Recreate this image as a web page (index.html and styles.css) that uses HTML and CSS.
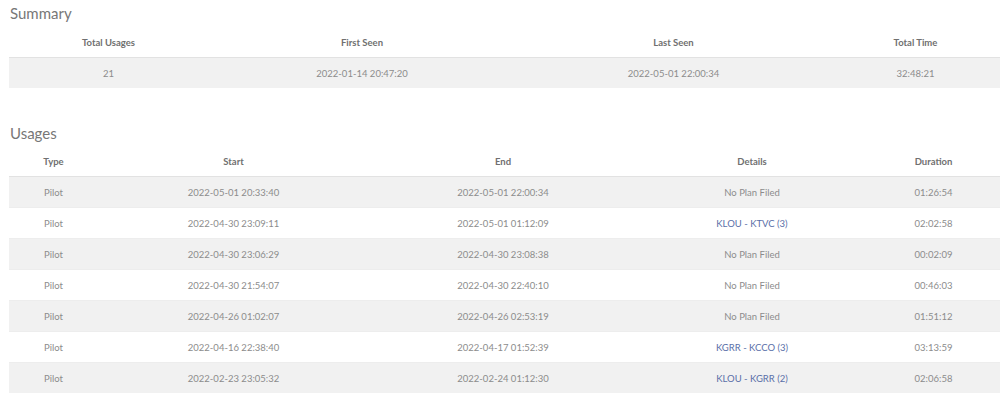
FILE: index.html
```html
<!DOCTYPE html>
<html>
<head>
<meta charset="utf-8">
<link rel="stylesheet" href="styles.css">
</head>
<body>
<div class="page">
  <section class="block summary">
    <h2 class="title">Summary</h2>
    <table class="grid">
      <colgroup>
        <col class="s1"><col class="s2"><col class="s3"><col class="s4">
      </colgroup>
      <thead>
        <tr><th>Total Usages</th><th>First Seen</th><th>Last Seen</th><th>Total Time</th></tr>
      </thead>
      <tbody>
        <tr><td>21</td><td>2022-01-14 20:47:20</td><td>2022-05-01 22:00:34</td><td>32:48:21</td></tr>
      </tbody>
    </table>
  </section>

  <section class="block usages">
    <h2 class="title">Usages</h2>
    <table class="grid">
      <colgroup>
        <col class="u1"><col class="u2"><col class="u3"><col class="u4"><col class="u5">
      </colgroup>
      <thead>
        <tr><th>Type</th><th>Start</th><th>End</th><th>Details</th><th>Duration</th></tr>
      </thead>
      <tbody>
        <tr><td>Pilot</td><td>2022-05-01 20:33:40</td><td>2022-05-01 22:00:34</td><td>No Plan Filed</td><td>01:26:54</td></tr>
        <tr><td>Pilot</td><td>2022-04-30 23:09:11</td><td>2022-05-01 01:12:09</td><td><a class="link" href="#">KLOU - KTVC (3)</a></td><td>02:02:58</td></tr>
        <tr><td>Pilot</td><td>2022-04-30 23:06:29</td><td>2022-04-30 23:08:38</td><td>No Plan Filed</td><td>00:02:09</td></tr>
        <tr><td>Pilot</td><td>2022-04-30 21:54:07</td><td>2022-04-30 22:40:10</td><td>No Plan Filed</td><td>00:46:03</td></tr>
        <tr><td>Pilot</td><td>2022-04-26 01:02:07</td><td>2022-04-26 02:53:19</td><td>No Plan Filed</td><td>01:51:12</td></tr>
        <tr><td>Pilot</td><td>2022-04-16 22:38:40</td><td>2022-04-17 01:52:39</td><td><a class="link" href="#">KGRR - KCCO (3)</a></td><td>03:13:59</td></tr>
        <tr><td>Pilot</td><td>2022-02-23 23:05:32</td><td>2022-02-24 01:12:30</td><td><a class="link" href="#">KLOU - KGRR (2)</a></td><td>02:06:58</td></tr>
      </tbody>
    </table>
  </section>
</div>
</body>
</html>
```

FILE: styles.css
```css
html, body {
  margin: 0;
  padding: 0;
  background: #ffffff;
}

body {
  font-family: Lato, "Open Sans", sans-serif;
  color: #888888;
}

.page {
  padding: 4px 0 0 9px;
}

.block {
  display: flex;
  flex-direction: column;
}

.usages {
  margin-top: 36px;
}

.title {
  margin: 0 0 0 1px;
  font-size: 15px;
  line-height: 18px;
  font-weight: 400;
  color: #777777;
}

.summary .title {
  margin-bottom: 5px;
}

.usages .title {
  margin-bottom: 4px;
}

.grid {
  width: 991px;
  border-collapse: collapse;
  table-layout: fixed;
  font-size: 9.5px;
}

.grid th,
.grid td {
  height: 30px;
  padding: 0;
  text-align: center;
  vertical-align: middle;
  white-space: nowrap;
}

.grid th {
  font-weight: 700;
  color: #707070;
  border-bottom: 1px solid #e2e2e2;
}

.grid td {
  color: #8c8c8c;
  border-top: 1px solid #ededed;
}

.grid tbody tr:nth-child(odd) td {
  background: #f1f1f1;
}

.s1 { width: 199px; }
.s2 { width: 308px; }
.s3 { width: 315px; }
.s4 { width: 169px; }

.u1 { width: 89px; }
.u2 { width: 271px; }
.u3 { width: 268px; }
.u4 { width: 230px; }
.u5 { width: 133px; }

.link {
  color: #5a6fa8;
  text-decoration: none;
}
```
